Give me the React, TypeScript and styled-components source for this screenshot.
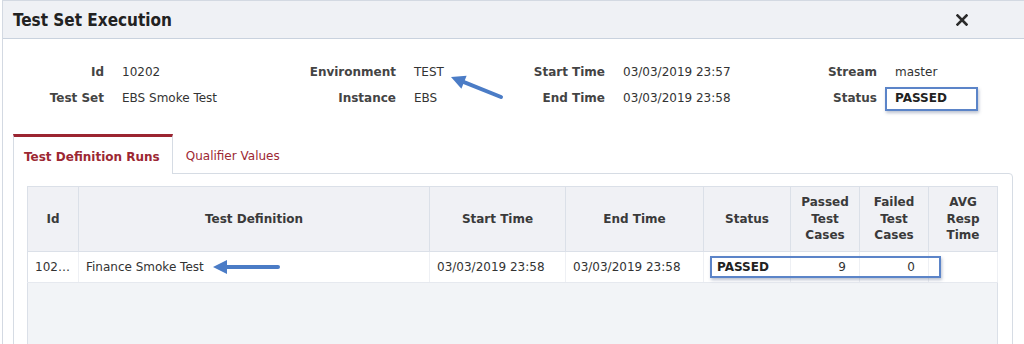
import styled, { createGlobalStyle } from 'styled-components';

const GlobalStyle = createGlobalStyle`
  html, body {
    margin: 0;
    padding: 0;
    background: #ffffff;
    overflow: hidden;
  }
  body {
    font-family: 'DejaVu Sans', Verdana, sans-serif;
    font-size: 12px;
    color: #333333;
  }
`;

const Screen = styled.div`
  position: relative;
  width: 1024px;
  height: 344px;
  overflow: hidden;
  padding-left: 2px;
  box-sizing: border-box;
`;

const Dialog = styled.div`
  border-top: 1px solid #d3d9e2;
  border-left: 1px solid #d3d9e2;
  background: #ffffff;
  height: 100%;
  box-sizing: border-box;
`;

const TitleBar = styled.div`
  height: 37px;
  display: flex;
  align-items: center;
  justify-content: space-between;
  padding: 0 55px 0 10px;
  background: #eff1f5;
  border-bottom: 1px solid #c9d2de;
`;

const Title = styled.h1`
  margin: 0;
  font-family: 'DejaVu Sans Condensed', 'DejaVu Sans', sans-serif;
  font-size: 17px;
  font-weight: bold;
  color: #222222;
`;

const CloseButton = styled.button`
  border: 0;
  background: transparent;
  padding: 0;
  width: 14px;
  height: 14px;
  display: flex;
  align-items: center;
  justify-content: center;
  cursor: pointer;
`;

const Body = styled.div`
  padding: 20px 11px 0 10px;
`;

const InfoGrid = styled.div`
  display: grid;
  grid-template-columns: 91px 138px 118px 55px 118px 136px 100px auto;
  grid-auto-rows: 26px;
  column-gap: 18px;
  align-items: center;
`;

const Label = styled.div`
  font-weight: bold;
  color: #444444;
  text-align: right;
  white-space: nowrap;
`;

const Value = styled.div`
  color: #333333;
  white-space: nowrap;
`;

const StrongValue = styled(Value)`
  font-weight: bold;
  color: #222222;
`;

const TabStrip = styled.div`
  display: flex;
  align-items: stretch;
  margin-top: 23px;
  height: 39px;
  position: relative;
  z-index: 1;
`;

const Tab = styled.div<{ $active?: boolean }>`
  display: flex;
  align-items: center;
  padding: ${({ $active }) => ($active ? '2px 12px 0 10px' : '2px 11px 0 12px')};
  box-sizing: border-box;
  color: #9c2833;
  font-weight: ${({ $active }) => ($active ? 'bold' : 'normal')};
  background: ${({ $active }) => ($active ? '#ffffff' : 'transparent')};
  border-top: 3px solid ${({ $active }) => ($active ? '#9b2531' : 'transparent')};
  border-left: 1px solid ${({ $active }) => ($active ? '#d6dce4' : 'transparent')};
  border-right: 1px solid ${({ $active }) => ($active ? '#d6dce4' : 'transparent')};
  margin-bottom: ${({ $active }) => ($active ? '-1px' : '0')};
  white-space: nowrap;
`;

const Panel = styled.div`
  border: 1px solid #d6dce4;
  border-top-right-radius: 4px;
  padding: 12px 12px 0 13px;
  height: 200px;
  box-sizing: border-box;
`;

const Grid = styled.table`
  width: 971px;
  table-layout: fixed;
  border-collapse: collapse;
  border: 1px solid #dbe0e8;
  background: #f2f4f7;
`;

const HeadCell = styled.th`
  height: 64px;
  padding: 0 4px;
  background: #f0f1f5;
  border-right: 1px solid #dbe0e8;
  border-bottom: 1px solid #dbe0e8;
  font-weight: bold;
  color: #3a3a3a;
  text-align: center;
  vertical-align: middle;
  line-height: 16.5px;
`;

const Cell = styled.td<{ $align?: 'left' | 'right' }>`
  height: 30px;
  padding: 0 ${({ $align }) => ($align === 'right' ? '13px' : '7px')} 0 7px;
  background: #ffffff;
  border-right: 1px solid #eef0f4;
  border-bottom: 1px solid #e6e9ef;
  text-align: ${({ $align }) => $align ?? 'left'};
  white-space: nowrap;
  overflow: hidden;
  text-overflow: ellipsis;
  color: #333333;
`;

const BoldCell = styled(Cell)`
  padding-left: 13px;
  font-weight: bold;
  color: #222222;
`;

const FillRow = styled.tr`
  height: 100px;
`;

const Overlay = styled.svg`
  position: absolute;
  left: 0;
  top: 0;
  pointer-events: none;
`;

const Highlight = styled.div`
  position: absolute;
  border: 2px solid #5b84c8;
  box-shadow: 1px 2px 3px rgba(60, 80, 120, 0.35);
  box-sizing: border-box;
  pointer-events: none;
`;

const columns = [51, 351, 136, 138, 87, 69, 69, 69];

function Arrow({ x1, y1, x2, y2 }: { x1: number; y1: number; x2: number; y2: number }) {
  // x1,y1 tail, x2,y2 tip
  const dx = x2 - x1;
  const dy = y2 - y1;
  const len = Math.hypot(dx, dy);
  const ux = dx / len;
  const uy = dy / len;
  const head = 14;
  const half = 7;
  const bx = x2 - ux * head;
  const by = y2 - uy * head;
  const px = -uy * half;
  const py = ux * half;
  return (
    <g>
      <line x1={x1} y1={y1} x2={bx + ux * 2} y2={by + uy * 2} stroke="#4b7cc6" strokeWidth={4} strokeLinecap="round" />
      <polygon points={`${x2},${y2} ${bx + px},${by + py} ${bx - px},${by - py}`} fill="#4b7cc6" />
    </g>
  );
}

export default function App() {
  return (
    <>
      <GlobalStyle />
      <Screen>
        <Dialog>
          <TitleBar>
            <Title>Test Set Execution</Title>
            <CloseButton aria-label="Close">
              <svg width="12" height="12" viewBox="0 0 12 12">
                <path d="M1.5 1.5 L10.5 10.5 M10.5 1.5 L1.5 10.5" stroke="#2b2b2b" strokeWidth="2.6" strokeLinecap="square" />
              </svg>
            </CloseButton>
          </TitleBar>
          <Body>
            <InfoGrid>
              <Label>Id</Label>
              <Value>10202</Value>
              <Label>Environment</Label>
              <Value>TEST</Value>
              <Label>Start Time</Label>
              <Value>03/03/2019 23:57</Value>
              <Label>Stream</Label>
              <Value>master</Value>
              <Label>Test Set</Label>
              <Value>EBS Smoke Test</Value>
              <Label>Instance</Label>
              <Value>EBS</Value>
              <Label>End Time</Label>
              <Value>03/03/2019 23:58</Value>
              <Label>Status</Label>
              <StrongValue>PASSED</StrongValue>
            </InfoGrid>
            <TabStrip>
              <Tab $active>Test Definition Runs</Tab>
              <Tab>Qualifier Values</Tab>
            </TabStrip>
            <Panel>
              <Grid>
                <colgroup>
                  {columns.map((w, i) => (
                    <col key={i} style={{ width: w }} />
                  ))}
                </colgroup>
                <thead>
                  <tr>
                    <HeadCell>Id</HeadCell>
                    <HeadCell>Test Definition</HeadCell>
                    <HeadCell>Start Time</HeadCell>
                    <HeadCell>End Time</HeadCell>
                    <HeadCell>Status</HeadCell>
                    <HeadCell>Passed Test Cases</HeadCell>
                    <HeadCell>Failed Test Cases</HeadCell>
                    <HeadCell>AVG Resp Time</HeadCell>
                  </tr>
                </thead>
                <tbody>
                  <tr>
                    <Cell>10202</Cell>
                    <Cell>Finance Smoke Test</Cell>
                    <Cell>03/03/2019 23:58</Cell>
                    <Cell>03/03/2019 23:58</Cell>
                    <BoldCell>PASSED</BoldCell>
                    <Cell $align="right">9</Cell>
                    <Cell $align="right">0</Cell>
                    <Cell $align="right"></Cell>
                  </tr>
                  <FillRow>
                    <td colSpan={8} />
                  </FillRow>
                </tbody>
              </Grid>
            </Panel>
          </Body>
        </Dialog>
        <Highlight style={{ left: 885, top: 87, width: 93, height: 24 }} />
        <Highlight style={{ left: 710, top: 256, width: 231, height: 22 }} />
        <Overlay width={1024} height={344}>
          <Arrow x1={501} y1={97} x2={451} y2={77} />
          <Arrow x1={278} y1={267} x2={213} y2={267} />
        </Overlay>
      </Screen>
    </>
  );
}
